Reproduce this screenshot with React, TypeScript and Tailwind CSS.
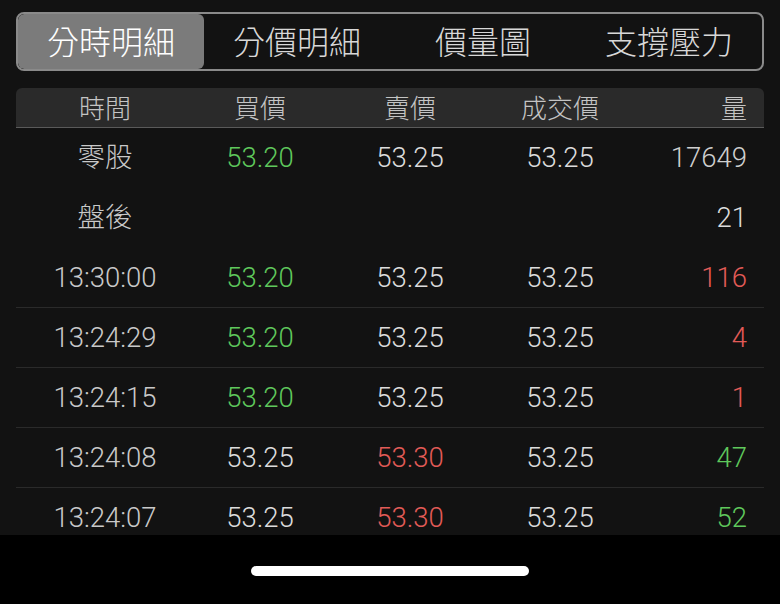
const tabs = ["分時明細", "分價明細", "價量圖", "支撐壓力"];

type Row = {
  time: string;
  buy: string;
  sell: string;
  deal: string;
  vol: string;
  buyC?: string;
  sellC?: string;
  volC?: string;
  line?: boolean;
};

const GREEN = "text-[#5fc85c]";
const RED = "text-[#e25b57]";
const WHITE = "text-[#dcdcdc]";

const rows: Row[] = [
  { time: "零股", buy: "53.20", sell: "53.25", deal: "53.25", vol: "17649", buyC: GREEN, volC: "text-[#cfcfcf]" },
  { time: "盤後", buy: "", sell: "", deal: "", vol: "21" },
  { time: "13:30:00", buy: "53.20", sell: "53.25", deal: "53.25", vol: "116", buyC: GREEN, volC: RED, line: true },
  { time: "13:24:29", buy: "53.20", sell: "53.25", deal: "53.25", vol: "4", buyC: GREEN, volC: RED, line: true },
  { time: "13:24:15", buy: "53.20", sell: "53.25", deal: "53.25", vol: "1", buyC: GREEN, volC: RED, line: true },
  { time: "13:24:08", buy: "53.25", sell: "53.30", deal: "53.25", vol: "47", sellC: RED, volC: GREEN, line: true },
  { time: "13:24:07", buy: "53.25", sell: "53.30", deal: "53.25", vol: "52", sellC: RED, volC: GREEN },
];

function Cells({ r }: { r: Row }) {
  return (
    <>
      <div className="w-[150px] text-center text-[#c9c9c9]">{r.time}</div>
      <div className={`w-[160px] text-center ${r.buyC ?? WHITE}`}>{r.buy}</div>
      <div className={`w-[140px] text-center ${r.sellC ?? WHITE}`}>{r.sell}</div>
      <div className={`w-[160px] text-center ${WHITE}`}>{r.deal}</div>
      <div className={`w-[107px] text-right ${r.volC ?? WHITE}`}>{r.vol}</div>
    </>
  );
}

export default function App() {
  return (
    <div
      className="w-[780px] h-[604px] bg-black flex flex-col overflow-hidden"
      style={{ fontFamily: 'Roboto, "Noto Sans CJK TC", sans-serif' }}
    >
      <div className="h-[535px] bg-[#121212] px-4 pt-3 overflow-hidden">
        <div className="flex h-[59px] rounded-lg border-2 border-[#8a8a8a] overflow-hidden">
          {tabs.map((t, i) => (
            <div
              key={t}
              className={`flex-1 flex items-center justify-center pt-[3px] text-[32px] font-light ${
                i === 0 ? "bg-[#7b7b7b] text-white rounded-md" : "text-[#d8d8d8]"
              }`}
            >
              {t}
            </div>
          ))}
        </div>

        <div className="mt-[17px] h-[40px] bg-[#2a2a2a] rounded-t-md border-b border-[#5a5a5a] flex items-center pl-[14px] pt-[3px] text-[26px] font-light text-[#c4c4c4]">
          <div className="w-[150px] text-center">時間</div>
          <div className="w-[160px] text-center">買價</div>
          <div className="w-[140px] text-center">賣價</div>
          <div className="w-[160px] text-center">成交價</div>
          <div className="w-[107px] text-right">量</div>
        </div>

        {rows.map((r) => (
          <div
            key={r.time}
            className={`h-[60px] flex items-center pl-[14px] text-[27.5px] font-light ${
              r.line ? "border-b border-[#2a2a2a]" : ""
            }`}
          >
            <Cells r={r} />
          </div>
        ))}
      </div>

      <div className="flex-1 flex items-center justify-center">
        <div className="w-[278px] h-[10px] rounded-full bg-white mt-[2px]" />
      </div>
    </div>
  );
}
